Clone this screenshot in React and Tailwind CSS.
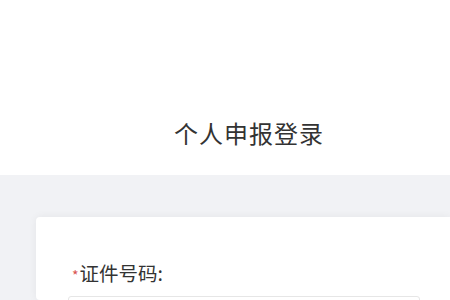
export default function App() {
  return (
    <div className="w-[450px] h-[300px] overflow-hidden bg-white font-['Noto_Sans_CJK_SC',sans-serif]">
      <div className="h-[175px] pt-[117px] pl-[48px] text-center">
        <h1 className="text-[24px] leading-[32px] text-[#333] tracking-[1px]">个人申报登录</h1>
      </div>
      <div className="h-[125px] bg-[#f1f2f5] pt-[42px] pl-[36px]">
        <div className="h-full bg-white rounded-l-[4px] shadow-[0_0_8px_rgba(0,0,0,0.06)] pt-[42px] pl-[36px] pr-[30px]">
          <div className="flex items-baseline text-[19.5px] leading-[28px] text-[#333]">
            <span className="text-[#d9534f] text-[14px] mr-[1px]">*</span>
            <span>证件号码:</span>
          </div>
          <div className="mt-[7px] -ml-[4px] h-[36px] border border-[#e6e6e6] rounded-[3px]" />
        </div>
      </div>
    </div>
  );
}
